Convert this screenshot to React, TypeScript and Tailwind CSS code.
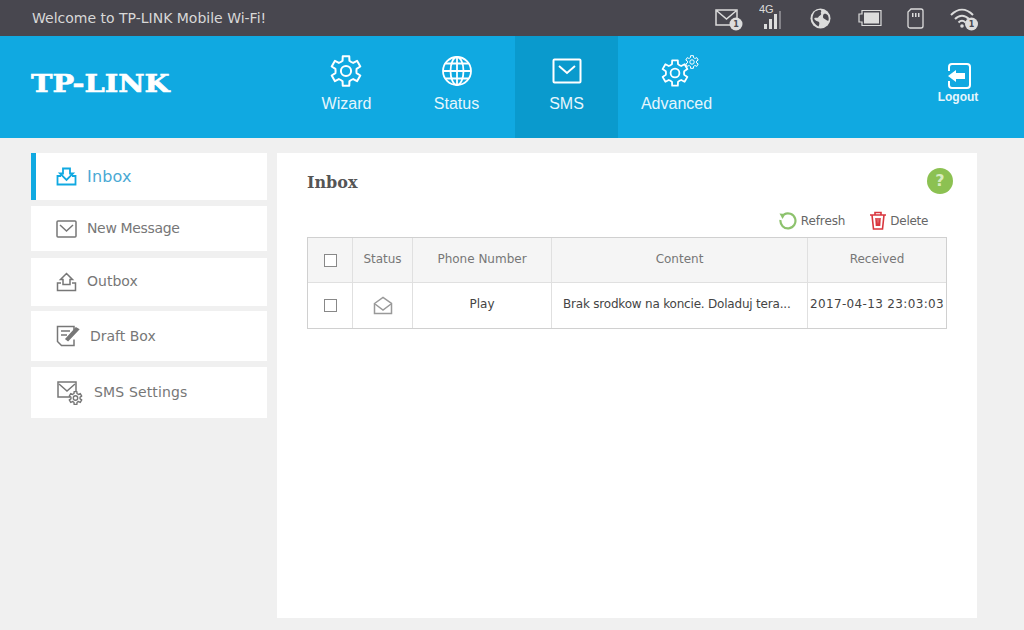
const sans = "font-['DejaVu_Sans',sans-serif]"

function Gear({ x, y, s, w = 2 }: { x: number; y: number; s: number; w?: number }) {
  // gear outline centered on x,y at radius s
  const pts: string[] = []
  const teeth = 6
  for (let i = 0; i < teeth; i++) {
    const a = (i / teeth) * Math.PI * 2 - Math.PI / 2
    const step = Math.PI / teeth
    const p = (r: number, t: number) => `${(x + r * Math.cos(t)).toFixed(2)} ${(y + r * Math.sin(t)).toFixed(2)}`
    pts.push(`${i === 0 ? "M" : "L"}${p(s, a - step * 0.42)}`)
    pts.push(`L${p(s, a + step * 0.42)}`)
    pts.push(`L${p(s * 0.72, a + step * 0.62)}`)
    pts.push(`Q${p(s * 0.68, a + step)} ${p(s * 0.72, a + step * 1.38)}`)
  }
  return (
    <>
      <path d={pts.join(" ") + "Z"} fill="none" stroke="currentColor" strokeWidth={w} strokeLinejoin="round" />
      <circle cx={x} cy={y} r={s * 0.34} fill="none" stroke="currentColor" strokeWidth={w} />
    </>
  )
}

function Badge({ cx, cy }: { cx: number; cy: number }) {
  return (
    <>
      <circle cx={cx} cy={cy} r="6.500" fill="#dcdcdc" />
      <text x={cx} y={cy + 3} textAnchor="middle" fontSize="8" fontWeight="700" fill="#48474f" fontFamily="DejaVu Sans">1</text>
    </>
  )
}

function StatusIcons() {
  return (
    <div className="ml-auto mr-[45px] flex items-center text-[#dcdcdc]">
      <svg width="28" height="24" viewBox="0 0 28 24" className="mt-[2px]">
        <path d="M1 3h21v15H1zM2 4l9.500 8L21 4" fill="none" stroke="currentColor" strokeWidth="1.500" />
        <Badge cx={21} cy={17} />
      </svg>
      <svg width="24" height="26" viewBox="0 0 24 26" className="ml-[16px] mb-[3px]">
        <text x="0" y="9" fontSize="11" fill="currentColor" fontFamily="Liberation Sans">4G</text>
        <rect x="5" y="20" width="3" height="5" fill="currentColor" />
        <rect x="10" y="15" width="3" height="10" fill="currentColor" />
        <rect x="15" y="10" width="3" height="15" fill="currentColor" />
        <rect x="20" y="7" width="2" height="18" fill="#85848a" />
      </svg>
      <svg width="21" height="21" viewBox="0 0 21 21" className="ml-[27px]">
        <circle cx="10.500" cy="10.500" r="10" fill="currentColor" />
        <path d="M5 3.500c2-1 5-2 6-1 1 1-1 2 0 3 1 1.500-2 2-2.500 3.500-.5 1.500-3 0-4 1-1 1 1.500 3 3.500 3.500 2 .5 1.500 3 .5 5-3-1.500-6-5-6-8 0-2.500 1-5.500 2.500-7zM14 6c1-.5 3 0 4 1.500.5 1.500 1 3 .5 5-1 .5-2 0-3-1-1-1-2.500-1-2.500-2.500 0-1 0-2.500 1-3z" fill="#48474f" />
      </svg>
      <svg width="24" height="18" viewBox="0 0 24 18" className="ml-[27px]">
        <path d="M4 1.500h19v15H4V13H1V5h3z" fill="none" stroke="currentColor" strokeWidth="1.200" />
        <rect x="6" y="3.500" width="15" height="11" fill="currentColor" />
      </svg>
      <svg width="17" height="21" viewBox="0 0 17 21" className="ml-[25px]">
        <path d="M4 1h10a2 2 0 0 1 2 2v15a2 2 0 0 1-2 2H3a2 2 0 0 1-2-2V4z" fill="none" stroke="currentColor" strokeWidth="1.300" />
        <path d="M5 5h1.500v4H5zM8 5h1.500v4H8zM11 5h1.500v4H11z" fill="currentColor" />
      </svg>
      <svg width="29" height="24" viewBox="0 0 29 24" className="ml-[26px] mt-[1px]">
        <path d="M1 8c7-7 15-7 22 0M5 12c4.500-4.500 9.500-4.500 14 0M8.500 15.500c2.500-2.500 4.500-2.500 7 0" fill="none" stroke="currentColor" strokeWidth="2" />
        <circle cx="12" cy="19" r="1.800" fill="currentColor" />
        <Badge cx={21.500} cy={17} />
      </svg>
    </div>
  )
}

function NavItem({ label, active, children }: { label: string; active?: boolean; children: React.ReactNode }) {
  return (
    <div className={`flex h-full w-[103px] flex-col items-center pt-[18px] ${active ? "bg-[#0a9acd]" : ""}`}>
      <div className="flex h-[34px] items-center">{children}</div>
      <span className="mt-[6px] font-['Liberation_Sans',sans-serif] text-[16px] leading-[20px] text-[#e6f6fc]">{label}</span>
    </div>
  )
}

function Header() {
  return (
    <header className="flex h-[102px] items-stretch bg-[#10a9e1] text-white">
      <div className="w-[295px] pl-[31px] pt-[32px]">
        <span className="block w-[140px] origin-left scale-x-[1.2] whitespace-nowrap font-['DejaVu_Serif',serif] text-[24px] font-bold leading-[32px] text-white [-webkit-text-stroke:0.6px_white]">TP-LINK</span>
      </div>
      <nav className="flex gap-[7px]">
        <NavItem label="Wizard">
          <svg width="34" height="34" viewBox="0 0 34 34" className="-ml-[1px] text-white">
            <Gear x={17} y={17} s={15} />
          </svg>
        </NavItem>
        <NavItem label="Status">
          <svg width="32" height="32" viewBox="0 0 32 32" fill="none" stroke="white" strokeWidth="1.800">
            <circle cx="16" cy="16" r="14" />
            <ellipse cx="16" cy="16" rx="6.500" ry="14" />
            <path d="M16 2v28M2 16h28M4.500 8.500h23M4.500 23.500h23" />
          </svg>
        </NavItem>
        <NavItem label="SMS" active>
          <svg width="30" height="26" viewBox="0 0 30 26" fill="none" stroke="white" strokeWidth="2">
            <rect x="1.500" y="1.500" width="27" height="23" rx="1" />
            <path d="M7 8l8 7 8-7" />
          </svg>
        </NavItem>
        <NavItem label="Advanced">
          <svg width="40" height="34" viewBox="0 0 40 34" className="ml-[6px] text-white">
            <Gear x={15} y={19} s={13} w={1.800} />
            <Gear x={32} y={8} s={6.500} w={1} />
          </svg>
        </NavItem>
      </nav>
      <div className="ml-auto mr-[46px] flex w-[40px] flex-col items-center pt-[27px]">
        <svg width="26" height="26" viewBox="0 0 26 26" fill="none" className="-ml-[1px]">
          <path d="M4 8V4a3 3 0 0 1 3-3h15a3 3 0 0 1 3 3v18a3 3 0 0 1-3 3H7a3 3 0 0 1-3-3v-4" stroke="white" strokeWidth="2" />
          <path d="M3 13l8-6v3h9v6h-9v3z" fill="white" />
        </svg>
        <span className="mt-[1px] font-['Liberation_Sans',sans-serif] text-[12px] font-bold leading-[14px] text-[#e6f6fc]">Logout</span>
      </div>
    </header>
  )
}

function SideItem({ label, h, pl, gap, active, icon }: { label: string; h: string; pl: string; gap: string; active?: boolean; icon: React.ReactNode }) {
  return (
    <div className={`flex items-center bg-white ${h} ${pl} ${active ? "border-l-[5px] border-[#10a9e1] text-[16px] text-[#4aa9d4]" : "text-[14px] text-[#777]"}`}>
      {icon}
      <span className={gap}>{label}</span>
    </div>
  )
}

function Sidebar() {
  return (
    <aside className={`flex w-[236px] flex-col ${sans}`}>
      <SideItem label="Inbox" h="h-[47px]" pl="pl-[20px]" gap="ml-[10px] tracking-[0.2px]" active icon={
        <svg width="21" height="19" viewBox="0 0 21 19" fill="none" stroke="#10a9e1" strokeWidth="1.800">
          <path d="M7 1.500h7v5h3l-6.500 6.500L4 6.500h3z" />
          <path d="M5 9H1.500v8.500h18V9H16" />
        </svg>
      } />
      <div className="mt-[6px]">
        <SideItem label="New Message" h="h-[45px]" pl="pl-[25px]" gap="ml-[10px] tracking-[-0.35px]" icon={
          <svg width="21" height="18" viewBox="0 0 21 18" fill="none" stroke="#777" strokeWidth="1.500">
            <rect x="1" y="1" width="19" height="16" rx="1" />
            <path d="M4 5l6.500 6L17 5" />
          </svg>
        } />
      </div>
      <div className="mt-[7px]">
        <SideItem label="Outbox" h="h-[48px]" pl="pl-[25px]" gap="ml-[10px] -mt-[2px]" icon={
          <svg width="21" height="20" viewBox="0 0 21 20" fill="none" stroke="#777" strokeWidth="1.500">
            <path d="M10.500 1.500l6 6H14v5H7v-5H4.500z" />
            <path d="M5 11H1.500v7.500h18V11H16" />
          </svg>
        } />
      </div>
      <div className="mt-[5px]">
        <SideItem label="Draft Box" h="h-[50px]" pl="pl-[25px]" gap="ml-[10px]" icon={
          <svg width="24" height="22" viewBox="0 0 24 22" fill="none" stroke="#777" strokeWidth="1.500">
            <path d="M18 7V1.500H1.500v15l4 4H18v-6" />
            <path d="M5 6h9M5 10h6" />
            <path d="M10 14l10-11 2.500 1.500L12 15.500z" fill="#777" />
          </svg>
        } />
      </div>
      <div className="mt-[6px]">
        <SideItem label="SMS Settings" h="h-[51px]" pl="pl-[26px]" gap="ml-[11px] tracking-[0.15px]" icon={
          <svg width="26" height="24" viewBox="0 0 26 24" fill="none" stroke="#777" strokeWidth="1.500" className="text-[#777]">
            <path d="M13 16H1V1h18v9" />
            <path d="M2 3l8 7 8-7" />
            <Gear x={18.500} y={17} s={6.500} w={1.400} />
          </svg>
        } />
      </div>
    </aside>
  )
}

function Check() {
  return <span className="block h-[13px] w-[13px] border border-[#888] bg-white" />
}

const cell = "flex items-center justify-center border-l border-[#e0e0e0] first:border-l-0"
const cols = "grid grid-cols-[44px_60px_139px_256px_139px]"

function Inbox() {
  return (
    <main className={`ml-[10px] h-[465px] w-[700px] bg-white pl-[30px] pr-[30px] ${sans}`}>
      <div className="flex h-[60px] items-center justify-between">
        <h1 className="font-['DejaVu_Serif',serif] text-[16px] font-bold text-[#555]">Inbox</h1>
        <span className="-mr-[6px] mb-[4px] flex h-[26px] w-[26px] items-center justify-center rounded-full bg-[#8cc152] text-[16px] font-bold text-[#d8ecc0]">?</span>
      </div>
      <div className="flex h-[24px] items-center justify-end pb-[9px] pr-[19px] text-[12px] tracking-[-0.1px] text-[#666]">
        <svg width="19" height="19" viewBox="0 0 19 19" fill="none" stroke="#8dc26d" strokeWidth="2.200">
          <path d="M6 3.500A7.500 7.500 0 1 1 2.500 9" />
          <path d="M1.500 2.500l6 .5-3 5z" fill="#8dc26d" stroke="none" />
        </svg>
        <span className="ml-[4px]">Refresh</span>
        <svg width="18" height="19" viewBox="0 0 18 19" fill="none" stroke="#d9363e" strokeWidth="1.600" className="ml-[24px]">
          <path d="M1 4h16M6 4V1.500h6V4M3 4l1.500 14h9L15 4M7 7l.5 8M11 7l-.5 8M9 7v8" />
        </svg>
        <span className="ml-[3px] tracking-[-0.3px]">Delete</span>
      </div>
      <div className="border border-[#d0d0d0] text-[12px]">
        <div className={`${cols} h-[45px] border-b border-[#e0e0e0] bg-[#f5f5f5] text-[#777]`}>
          <div className={`${cell} pt-[1px]`}><Check /></div>
          <div className={`${cell} pb-[3px]`}>Status</div>
          <div className={`${cell} pb-[3px]`}>Phone Number</div>
          <div className={`${cell} pb-[3px]`}>Content</div>
          <div className={`${cell} pb-[3px]`}>Received</div>
        </div>
        <div className={`${cols} h-[45px] text-[#444]`}>
          <div className={cell}><Check /></div>
          <div className={cell}>
            <svg width="20" height="19" viewBox="0 0 20 19" fill="none" stroke="#999" strokeWidth="1.500">
              <path d="M1.500 7.500L10 1.500l8.500 6v10h-17z" />
              <path d="M2 8l8 6 8-6" />
            </svg>
          </div>
          <div className={`${cell} pb-[3px]`}>Play</div>
          <div className={`${cell} justify-start pb-[3px] pl-[11px] tracking-[-0.2px]`}>Brak srodkow na koncie. Doladuj tera...</div>
          <div className={`${cell} whitespace-nowrap pb-[3px] tracking-[0.35px]`}>2017-04-13 23:03:03</div>
        </div>
      </div>
    </main>
  )
}

export default function App() {
  return (
    <div className="h-[630px] w-[1024px] overflow-hidden bg-[#f0f0f0]">
      <div className={`flex h-[36px] items-center bg-[#48474f] pl-[32px] text-[14px] text-[#d8d8d8] ${sans}`}>
        <span>Welcome to TP-LINK Mobile Wi-Fi!</span>
        <StatusIcons />
      </div>
      <Header />
      <div className="flex pl-[31px] pt-[15px]">
        <Sidebar />
        <Inbox />
      </div>
    </div>
  )
}
